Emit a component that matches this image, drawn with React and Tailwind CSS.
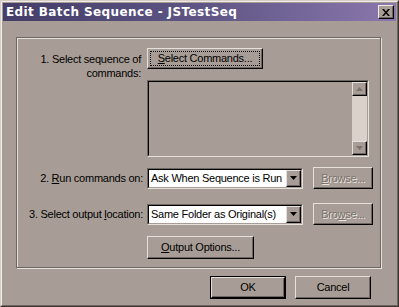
import React from "react";

const font = { fontFamily: '"Liberation Sans", Arial, sans-serif' };

function Btn({ children, className = "", disabled = false, def = false, focus = false }) {
  return (
    <div
      className={
        "relative flex items-center justify-center bg-[#a89d96] " +
        (def ? "border border-black " : "") +
        className
      }
    >
      <div className="absolute inset-0 border-t border-l border-[#e6e0da] border-r border-b border-r-[#000000] border-b-[#000000]" />
      <div className="absolute inset-[1px] border-r border-b border-[#6e6660]" />
      {focus && <div className="absolute inset-[3px] border border-dotted border-black" />}
      <span
        className={
          "relative whitespace-nowrap text-[11px] leading-none " +
          (disabled ? "text-[#7a726c] [text-shadow:1px_1px_0_#ece6e0]" : "text-black")
        }
      >
        {children}
      </span>
    </div>
  );
}

function Select({ text, className = "" }) {
  return (
    <div className={"relative flex items-stretch bg-white border-t border-l border-[#6e6660] border-r border-b border-r-[#e6e0da] border-b-[#e6e0da] " + className}>
      <div className="flex flex-1 min-w-0 items-stretch border-t border-l border-black border-r border-b border-r-[#a89d96] border-b-[#a89d96]">
        <div className="flex-1 min-w-0 overflow-hidden whitespace-nowrap pl-[2px] flex items-center text-[11px] text-black">{text}</div>
        <div className="relative w-[15px] shrink-0 bg-[#a89d96] flex items-center justify-center">
          <div className="absolute inset-0 border-t border-l border-[#e6e0da] border-r border-b border-r-black border-b-black" />
          <div className="absolute inset-[1px] border-r border-b border-[#6e6660]" />
          <svg width="7" height="4" viewBox="0 0 7 4" className="relative">
            <path d="M0 0h7L3.5 4z" fill="#000" />
          </svg>
        </div>
      </div>
    </div>
  );
}

export default function App() {
  return (
    <div
      style={font}
      className="relative w-[399px] h-[307px] bg-[#a89d96] tracking-[-0.25px] border-t border-l border-[#d6cfc8] border-r border-b border-r-[#3a3430] border-b-[#3a3430] overflow-hidden"
    >
      <div className="h-full w-full border-t border-l border-[#f0ebe6] border-r border-b border-r-[#6e6660] border-b-[#6e6660] flex flex-col">
        {/* title bar */}
        <div className="shrink-0 mx-[1px] mt-[1px] h-[18px] flex items-center justify-between bg-gradient-to-r from-[#433d68] via-[#5e5584] to-[#8b77ad] pl-[3px] pr-[2px]">
          <span className="text-white font-bold tracking-[0.4px] whitespace-nowrap" style={{ fontFamily: '"DejaVu Sans", Verdana, sans-serif', fontSize: "12px" }}>
            Edit Batch Sequence - JSTestSeq
          </span>
          <div className="relative w-[16px] h-[14px] bg-[#a89d96] flex items-center justify-center">
            <div className="absolute inset-0 border-t border-l border-[#f0ebe6] border-r border-b border-r-black border-b-black" />
            <div className="absolute inset-[1px] border-r border-b border-[#6e6660]" />
            <svg width="8" height="7" viewBox="0 0 8 7" className="relative">
              <path d="M0 0h2l2 2.5L6 0h2L5 3.5 8 7H6L4 4.5 2 7H0l3-3.5z" fill="#000" />
            </svg>
          </div>
        </div>

        {/* group box */}
        <div className="shrink-0 ml-[14px] mt-[16px] w-[365px] h-[231px] border border-[#6e6660] shadow-[1px_1px_0_#e6e0da,inset_1px_1px_0_#e6e0da]">
          <div className="flex flex-col pt-[10px]">
            {/* row 1 */}
            <div className="flex">
              <div className="w-[124px] text-right text-[11px] leading-[14px] text-black pt-[4px]">
                1. Select sequence of
                <br />
                commands:
              </div>
              <div className="ml-[6px] flex flex-col">
                <Btn className="w-[116px] h-[21px]" focus>
                  <span className="underline">S</span>elect Commands...
                </Btn>
                <div className="mt-[11px] w-[222px] h-[77px] border-t border-l border-[#6e6660] border-r border-b border-r-[#e6e0da] border-b-[#e6e0da]">
                  <div className="h-full w-full border-t border-l border-black border-r border-b border-r-[#a89d96] border-b-[#a89d96] flex justify-end">
                    <div className="w-[15px] h-full flex flex-col bg-[#d9d2cb]">
                      <div className="relative h-[14px] bg-[#a89d96] flex items-center justify-center">
                        <div className="absolute inset-0 border-t border-l border-[#e6e0da] border-r border-b border-r-black border-b-black" />
                        <div className="absolute inset-[1px] border-r border-b border-[#6e6660]" />
                        <svg width="7" height="4" viewBox="0 0 7 4" className="relative">
                          <path d="M3.5 0L7 4H0z" fill="#7a726c" />
                        </svg>
                      </div>
                      <div className="flex-1" />
                      <div className="relative h-[14px] bg-[#a89d96] flex items-center justify-center">
                        <div className="absolute inset-0 border-t border-l border-[#e6e0da] border-r border-b border-r-black border-b-black" />
                        <div className="absolute inset-[1px] border-r border-b border-[#6e6660]" />
                        <svg width="7" height="4" viewBox="0 0 7 4" className="relative">
                          <path d="M0 0h7L3.5 4z" fill="#7a726c" />
                        </svg>
                      </div>
                    </div>
                  </div>
                </div>
              </div>
            </div>

            {/* row 2 */}
            <div className="flex items-center mt-[10px]">
              <div className="w-[126px] whitespace-nowrap text-right text-[11px] text-black">
                2. <span className="underline">R</span>un commands on:
              </div>
              <Select className="ml-[4px] w-[156px] h-[21px]" text="Ask When Sequence is Run" />
              <Btn className="ml-[10px] w-[60px] h-[22px]" disabled>
                <span className="underline">B</span>rowse...
              </Btn>
            </div>

            {/* row 3 */}
            <div className="flex items-center mt-[14px]">
              <div className="w-[126px] whitespace-nowrap text-right text-[11px] text-black">
                3. Select output <span className="underline">l</span>ocation:
              </div>
              <Select className="ml-[4px] w-[156px] h-[21px]" text="Same Folder as Original(s)" />
              <Btn className="ml-[10px] w-[60px] h-[22px]" disabled>
                Bro<span className="underline">w</span>se...
              </Btn>
            </div>

            {/* row 4 */}
            <div className="flex mt-[11px]">
              <Btn className="ml-[130px] w-[107px] h-[23px]">
                <span className="underline">O</span>utput Options...
              </Btn>
            </div>
          </div>
        </div>

        {/* bottom buttons */}
        <div className="shrink-0 flex mt-[8px] ml-[208px]">
          <Btn className="w-[76px] h-[23px]" def>
            OK
          </Btn>
          <Btn className="ml-[9px] w-[76px] h-[23px]">Cancel</Btn>
        </div>
      </div>
    </div>
  );
}
